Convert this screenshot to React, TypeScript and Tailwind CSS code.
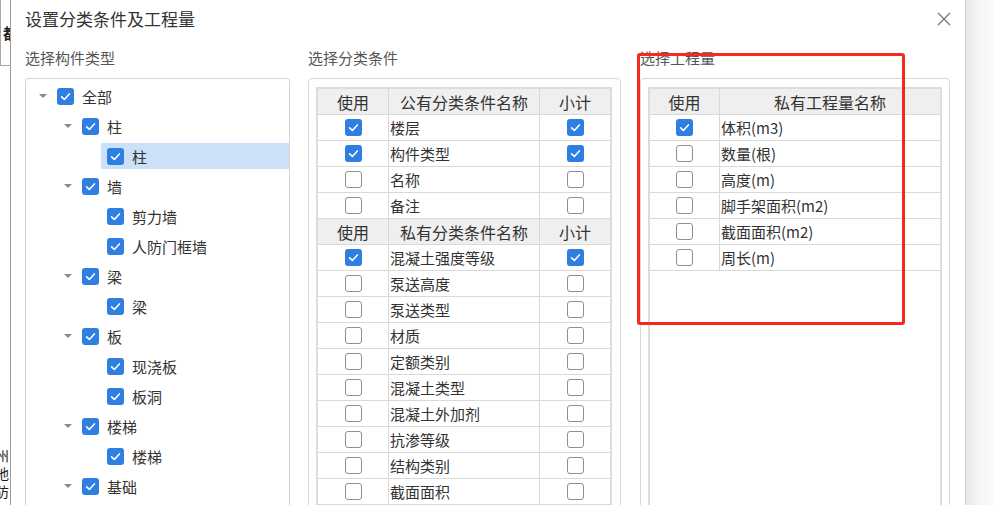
import React from "react";

type TreeItem = { level: 0 | 1 | 2; text: string; arrow?: boolean; selected?: boolean };

const tree: TreeItem[] = [
  { level: 0, text: "全部", arrow: true },
  { level: 1, text: "柱", arrow: true },
  { level: 2, text: "柱", selected: true },
  { level: 1, text: "墙", arrow: true },
  { level: 2, text: "剪力墙" },
  { level: 2, text: "人防门框墙" },
  { level: 1, text: "梁", arrow: true },
  { level: 2, text: "梁" },
  { level: 1, text: "板", arrow: true },
  { level: 2, text: "现浇板" },
  { level: 2, text: "板洞" },
  { level: 1, text: "楼梯", arrow: true },
  { level: 2, text: "楼梯" },
  { level: 1, text: "基础", arrow: true },
];

const indent = ["ml-[8px]", "ml-[33px]", "ml-[58px]"];

const publicRows: [string, boolean, boolean][] = [
  ["楼层", true, true],
  ["构件类型", true, true],
  ["名称", false, false],
  ["备注", false, false],
];

const privateRows: [string, boolean, boolean][] = [
  ["混凝土强度等级", true, true],
  ["泵送高度", false, false],
  ["泵送类型", false, false],
  ["材质", false, false],
  ["定额类别", false, false],
  ["混凝土类型", false, false],
  ["混凝土外加剂", false, false],
  ["抗渗等级", false, false],
  ["结构类别", false, false],
  ["截面面积", false, false],
];

const quantities: [string, boolean][] = [
  ["体积(m3)", true],
  ["数量(根)", false],
  ["高度(m)", false],
  ["脚手架面积(m2)", false],
  ["截面面积(m2)", false],
  ["周长(m)", false],
];

function Check({ checked }: { checked: boolean }) {
  if (!checked) {
    return <span className="block h-[17px] w-[17px] rounded-[3px] border border-[#8f8f8f] bg-white" />;
  }
  return (
    <span className="flex h-[17px] w-[17px] items-center justify-center rounded-[3px] bg-[#2f7fe3]">
      <svg width="13" height="13" viewBox="0 0 16 16" fill="none">
        <polyline points="3.2,8.4 6.6,11.6 12.8,4.8" stroke="white" strokeWidth="1.9" strokeLinecap="round" strokeLinejoin="round" />
      </svg>
    </span>
  );
}

function HeaderCell({ children, last }: { children: React.ReactNode; last?: boolean }) {
  return (
    <div className={`flex h-[26px] items-center justify-center border-b border-[#d9d9d9] bg-[#efefef] text-[16px] text-[#333] ${last ? "" : "border-r"}`}>
      {children}
    </div>
  );
}

function CheckCell({ checked, last }: { checked: boolean; last?: boolean }) {
  return (
    <div className={`flex h-[26px] items-center justify-center border-b border-[#d9d9d9] ${last ? "" : "border-r"}`}>
      <Check checked={checked} />
    </div>
  );
}

function TextCell({ children, last }: { children: React.ReactNode; last?: boolean }) {
  return (
    <div className={`flex h-[26px] items-center border-b border-[#d9d9d9] pl-[1px] text-[15px] text-[#333] ${last ? "" : "border-r"}`}>
      {children}
    </div>
  );
}

export default function App() {
  return (
    <div className="relative flex h-[505px] w-[994px] overflow-hidden bg-white font-['Noto_Sans_CJK_SC','Noto_Sans',sans-serif] leading-none">
      {/* background app strip */}
      <div className="flex w-[10px] flex-col overflow-hidden bg-white">
        <div className="flex h-[66px] items-center overflow-hidden border-b border-l border-[#a8a8a8] pl-[2px] text-[15px] font-bold text-[#222]">
          都
        </div>
        <div className="flex-1" />
        <div className="-ml-[5px] mb-[5px] flex flex-col text-[14px] text-[#222]">
          <span className="block h-[18px] overflow-hidden leading-[18px]">州</span>
          <span className="block h-[18px] overflow-hidden leading-[18px]">地</span>
          <span className="block h-[18px] overflow-hidden leading-[18px]">防</span>
        </div>
      </div>

      {/* dialog */}
      <div className="flex w-[955px] flex-col border-l border-[#9d9d9d] bg-white pl-[14px] pr-[15px]">
        <div className="flex h-[36px] shrink-0 items-center justify-between">
          <span className="text-[17px] text-[#333]">设置分类条件及工程量</span>
          <svg width="14" height="14" viewBox="0 0 14 14" className="-mr-[1px] mt-[2px]">
            <path d="M1 1L13 13M13 1L1 13" stroke="#777" strokeWidth="1.3" />
          </svg>
        </div>

        <div className="flex gap-[18px]">
          {/* column 1 */}
          <div className="flex w-[265px] flex-col">
            <div className="flex h-[42px] items-center text-[15px] text-[#555]">选择构件类型</div>
            <div className="flex h-[460px] flex-col gap-[4px] rounded-[3px] border border-[#d4d4d4] pt-[4px]">
              {tree.map((item, i) => (
                <div key={i} className={`flex h-[26px] items-center ${indent[item.level]}`}>
                  <div className="flex w-[17px] items-center justify-center">
                    {item.arrow && <span className="h-0 w-0 border-l-[4px] border-r-[4px] border-t-[4px] border-l-transparent border-r-transparent border-t-[#8a8a8a]" />}
                  </div>
                  <div className={`flex h-[26px] flex-1 items-center pl-[6px] ${item.selected ? "bg-[#cce0f7]" : ""}`}>
                    <Check checked />
                    <span className="ml-[8px] text-[15px] text-[#333]">{item.text}</span>
                  </div>
                </div>
              ))}
            </div>
          </div>

          {/* column 2 */}
          <div className="flex w-[313px] flex-col">
            <div className="flex h-[42px] items-center text-[15px] text-[#555]">选择分类条件</div>
            <div className="flex h-[460px] flex-col rounded-[4px] border border-[#d8d8d8] pl-[7px] pr-[8px] pt-[8px]">
              <div className="grid grid-cols-[71px_151px_70px] border-2 border-[#dcdcdc]">
                <HeaderCell>使用</HeaderCell>
                <HeaderCell>公有分类条件名称</HeaderCell>
                <HeaderCell last>小计</HeaderCell>
                {publicRows.map(([name, use, sub]) => (
                  <React.Fragment key={name}>
                    <CheckCell checked={use} />
                    <TextCell>{name}</TextCell>
                    <CheckCell checked={sub} last />
                  </React.Fragment>
                ))}
                <HeaderCell>使用</HeaderCell>
                <HeaderCell>私有分类条件名称</HeaderCell>
                <HeaderCell last>小计</HeaderCell>
                {privateRows.map(([name, use, sub]) => (
                  <React.Fragment key={name}>
                    <CheckCell checked={use} />
                    <TextCell>{name}</TextCell>
                    <CheckCell checked={sub} last />
                  </React.Fragment>
                ))}
              </div>
            </div>
          </div>

          {/* column 3 */}
          <div className="ml-[1px] flex w-[310px] flex-col">
            <div className="flex h-[42px] items-center text-[15px] text-[#555]">选择工程量</div>
            <div className="flex h-[460px] flex-col rounded-[4px] border border-[#d8d8d8] px-[7px] pt-[8px]">
              <div className="flex-1 border-2 border-[#dcdcdc]">
                <div className="grid grid-cols-[70px_220px]">
                  <HeaderCell>使用</HeaderCell>
                  <HeaderCell last>私有工程量名称</HeaderCell>
                  {quantities.map(([name, use]) => (
                    <React.Fragment key={name}>
                      <CheckCell checked={use} />
                      <TextCell last>{name}</TextCell>
                    </React.Fragment>
                  ))}
                </div>
              </div>
            </div>
          </div>
        </div>
      </div>

      {/* area behind the dialog on the right */}
      <div className="flex-1 border-l border-[#cfcfcf] bg-gradient-to-r from-[#e8e8e8] via-[#f6f6f6] to-[#fbfbfb]" />

      {/* red annotation frame */}
      <div className="pointer-events-none absolute left-[637px] top-[53px] h-[272px] w-[268px] rounded-[3px] border-[3px] border-[#f52a1e]" />
    </div>
  );
}
